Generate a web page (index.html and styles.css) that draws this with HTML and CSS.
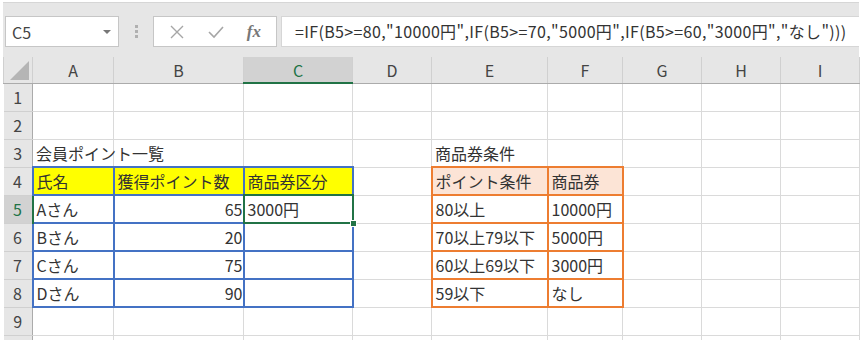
FILE: index.html
```html
<!DOCTYPE html>
<html lang="ja">
<head>
  <meta charset="UTF-8">
  <title>会員ポイント一覧</title>
  <link rel="stylesheet" href="styles.css">
</head>
<body>
  <div class="app">
    <div class="toolbar">
      <div class="namebox">
        <span>C5</span>
        <span class="caret"></span>
      </div>
      <div class="grip"><i></i><i></i><i></i></div>
      <div class="fbuttons">
        <svg class="ico" width="16" height="16" viewBox="0 0 16 16"><path d="M2 2 L14 14 M14 2 L2 14" stroke="#a6a6a6" stroke-width="1.4" fill="none"/></svg>
        <svg class="ico" width="18" height="16" viewBox="0 0 18 16"><path d="M2 8 L7 13 L16 3" stroke="#a6a6a6" stroke-width="1.6" fill="none"/></svg>
        <span class="fx">fx</span>
      </div>
      <div class="formula">=IF(B5&gt;=80,"10000円",IF(B5&gt;=70,"5000円",IF(B5&gt;=60,"3000円","なし")))</div>
    </div>

    <table class="sheet">
      <colgroup>
        <col class="w-rh"><col class="w-a"><col class="w-b"><col class="w-c"><col class="w-d">
        <col class="w-e"><col class="w-f"><col class="w-g"><col class="w-h"><col class="w-i">
      </colgroup>
      <tr class="colhead">
        <th class="corner"><span class="tri"></span></th>
        <th>A</th><th>B</th><th class="on">C</th><th>D</th><th>E</th><th>F</th><th>G</th><th>H</th><th>I</th>
      </tr>
      <tr><th class="rh">1</th><td></td><td></td><td></td><td></td><td></td><td></td><td></td><td></td><td></td></tr>
      <tr><th class="rh">2</th><td></td><td></td><td></td><td></td><td></td><td></td><td></td><td></td><td></td></tr>
      <tr><th class="rh">3</th><td>会員ポイント一覧</td><td></td><td></td><td></td><td>商品券条件</td><td></td><td></td><td></td><td></td></tr>
      <tr>
        <th class="rh">4</th>
        <td class="bl yel">氏名</td><td class="bl yel">獲得ポイント数</td><td class="bl yel">商品券区分</td>
        <td></td>
        <td class="or peach">ポイント条件</td><td class="or peach">商品券</td>
        <td></td><td></td><td></td>
      </tr>
      <tr>
        <th class="rh on">5</th>
        <td class="bl">Aさん</td><td class="bl num">65</td><td class="bl sel">3000円<span class="selbox"><span class="handle"></span></span></td>
        <td></td>
        <td class="or">80以上</td><td class="or">10000円</td>
        <td></td><td></td><td></td>
      </tr>
      <tr>
        <th class="rh">6</th>
        <td class="bl">Bさん</td><td class="bl num">20</td><td class="bl"></td>
        <td></td>
        <td class="or">70以上79以下</td><td class="or">5000円</td>
        <td></td><td></td><td></td>
      </tr>
      <tr>
        <th class="rh">7</th>
        <td class="bl">Cさん</td><td class="bl num">75</td><td class="bl"></td>
        <td></td>
        <td class="or">60以上69以下</td><td class="or">3000円</td>
        <td></td><td></td><td></td>
      </tr>
      <tr>
        <th class="rh">8</th>
        <td class="bl">Dさん</td><td class="bl num">90</td><td class="bl"></td>
        <td></td>
        <td class="or">59以下</td><td class="or">なし</td>
        <td></td><td></td><td></td>
      </tr>
      <tr><th class="rh">9</th><td></td><td></td><td></td><td></td><td></td><td></td><td></td><td></td><td></td></tr>
      <tr><th class="rh"></th><td></td><td></td><td></td><td></td><td></td><td></td><td></td><td></td><td></td></tr>
    </table>
  </div>
</body>
</html>
```

FILE: styles.css
```css
body {
  margin: 0;
  background: #fff;
  font-family: 'Noto Sans CJK JP', 'Noto Sans', sans-serif;
  color: #333;
  overflow: hidden;
}
.app {
  width: 856px;
  margin: 2px 0 0 3px;
}

/* toolbar */
.toolbar {
  display: flex;
  align-items: center;
  height: 55px;
  background: #e6e6e6;
  border-top: 1px solid #d6d6d6;
  box-sizing: border-box;
  padding: 0 0 0 2px;
}
.namebox {
  width: 114px;
  height: 31px;
  box-sizing: border-box;
  background: #fff;
  border: 1px solid #c6c6c6;
  display: flex;
  align-items: center;
  justify-content: space-between;
  padding: 0 7px 0 6px;
  font-size: 16px;
  color: #444;
  margin-top: 3px;
}
.caret {
  width: 0;
  height: 0;
  border-left: 4px solid transparent;
  border-right: 4px solid transparent;
  border-top: 4px solid #777;
}
.grip {
  width: 34px;
  display: flex;
  flex-direction: column;
  align-items: center;
  gap: 2px;
  margin-top: 3px;
}
.grip i {
  display: block;
  width: 3px;
  height: 3px;
  background: #b0b0b0;
}
.fbuttons {
  width: 124px;
  height: 31px;
  box-sizing: border-box;
  background: #fff;
  border: 1px solid #c6c6c6;
  display: flex;
  align-items: center;
  justify-content: space-around;
  padding: 0 4px 0 4px;
  margin-top: 3px;
}
.fx {
  font-family: 'Liberation Serif', serif;
  font-style: italic;
  font-size: 17px;
  color: #777;
  font-weight: bold;
}
.formula {
  flex: 1;
  height: 31px;
  box-sizing: border-box;
  margin: 3px 0 0 4px;
  background: #fff;
  border: 1px solid #d6d6d6;
  border-right: none;
  font-size: 16px;
  line-height: 29px;
  padding-left: 13px;
  color: #333;
  white-space: nowrap;
  overflow: hidden;
  letter-spacing: 0.35px;
}

/* sheet */
.sheet {
  border-collapse: collapse;
  table-layout: fixed;
  width: 856px;
}
.w-rh { width: 29px; }
.w-a { width: 81px; }
.w-b { width: 130px; }
.w-c { width: 109px; }
.w-d { width: 79px; }
.w-e { width: 116px; }
.w-f { width: 75px; }
.w-g { width: 79px; }
.w-h { width: 79px; }
.w-i { width: 79px; }

.sheet tr { height: 28px; }
.sheet tr.colhead { height: 26px; }
.sheet th, .sheet td {
  padding: 0;
  font-size: 16px;
  line-height: 20px;
  white-space: nowrap;
  overflow: visible;
}
.sheet td {
  border: 1px solid #dadada;
  padding-left: 3px;
  color: #333;
}
.colhead th {
  background: #e6e6e6;
  font-weight: normal;
  font-size: 16px;
  color: #444;
  border-left: 1px solid #d0d0d0;
  border-right: 1px solid #d0d0d0;
  border-bottom: 1px solid #ababab;
}
.colhead th.on {
  background: #d2d2d2;
  color: #217346;
  border-bottom: 2px solid #217346;
}
.corner {
  position: relative;
}
.tri {
  position: absolute;
  right: 3px;
  bottom: 3px;
  width: 0;
  height: 0;
  border-left: 19px solid transparent;
  border-bottom: 19px solid #b5b5b5;
}
.rh {
  background: #e6e6e6;
  font-weight: normal;
  color: #444;
  border-right: 1px solid #ababab;
  border-bottom: 1px solid #d0d0d0;
  text-align: center;
}
.rh.on {
  background: #d2d2d2;
  color: #217346;
  border-right: 2px solid #217346;
}

.num {
  text-align: right;
  padding-right: 2px;
}
.sheet td.bl { border: 2px solid #4472c4; }
.sheet td.or { border: 2px solid #ed7d31; }
.yel { background: #ffff00; }
.peach { background: #fce4d6; }

.sel { position: relative; }
.selbox {
  position: absolute;
  top: -2px;
  left: -2px;
  right: -2px;
  bottom: -2px;
  border: 2px solid #217346;
}
.handle {
  position: absolute;
  right: -5px;
  bottom: -5px;
  width: 5px;
  height: 5px;
  background: #217346;
  border: 1px solid #fff;
}
```
